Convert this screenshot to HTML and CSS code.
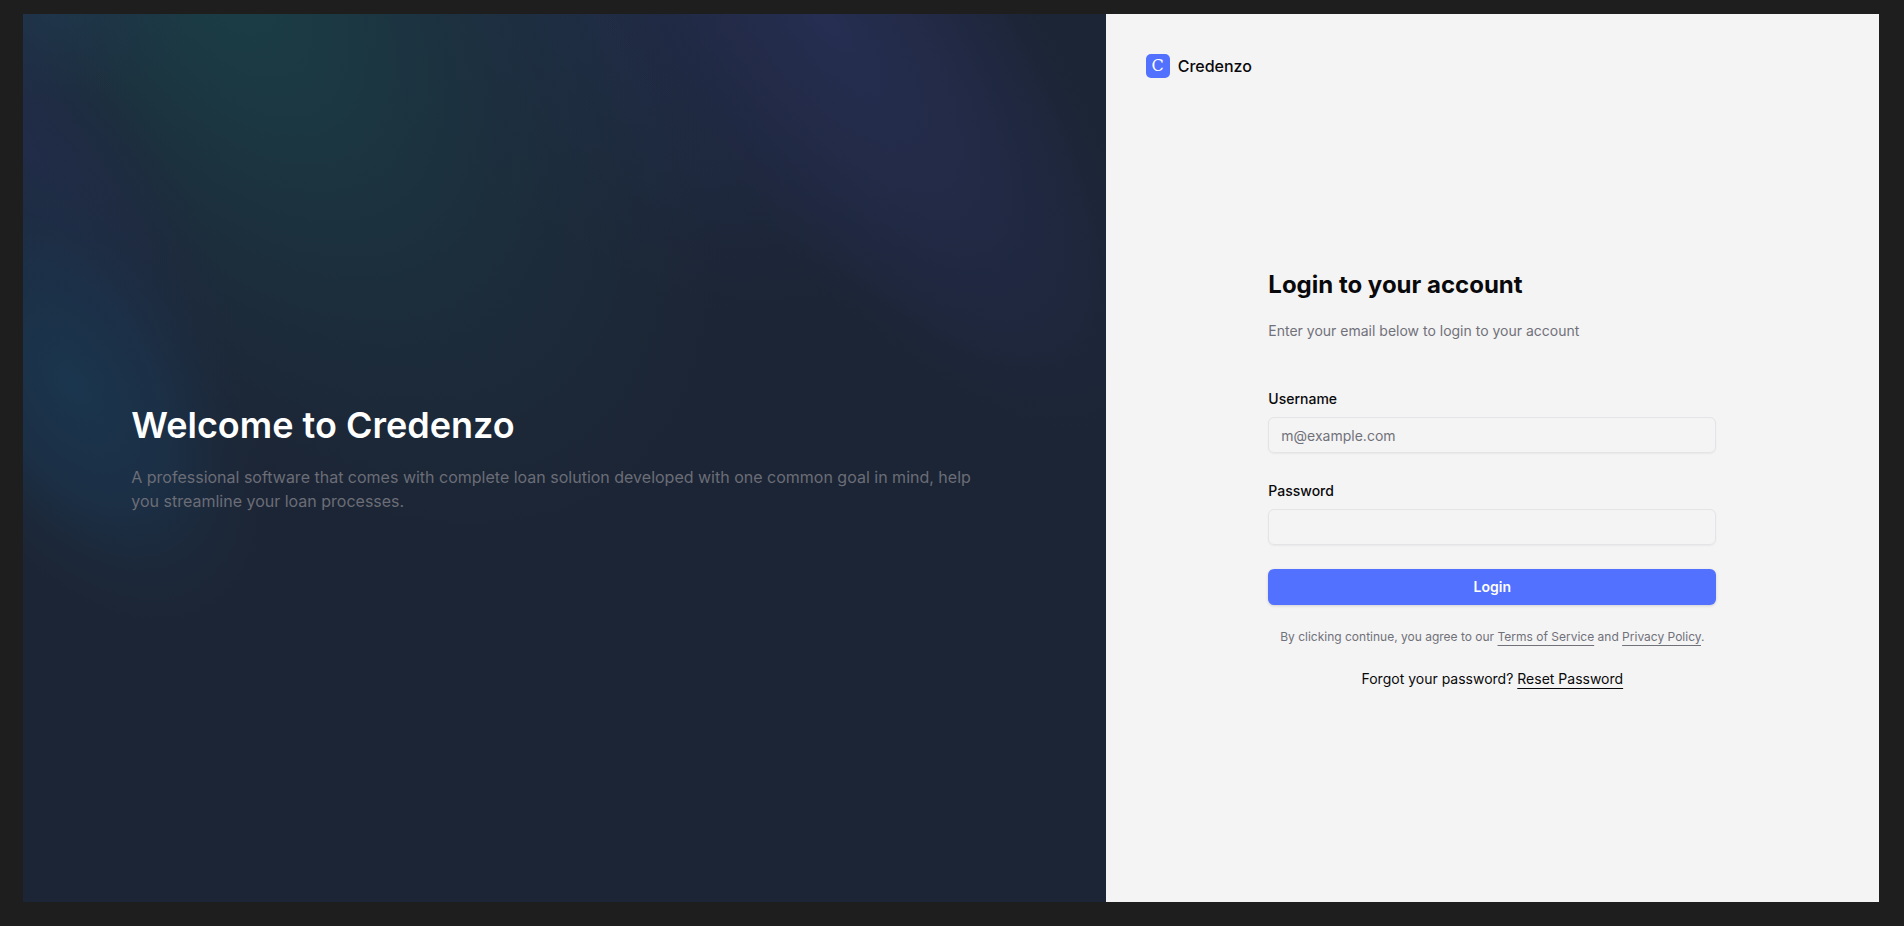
FILE: index.html
```html
<!DOCTYPE html>
<html lang="en">
<head>
<meta charset="utf-8">
<meta name="viewport" content="width=device-width, initial-scale=1">
<title>Credenzo - Login</title>
<link rel="stylesheet" href="styles.css">
</head>
<body>
<div class="shell">
  <section class="hero">
    <svg class="aurora" viewBox="0 0 1083 887" preserveAspectRatio="none" aria-hidden="true">
      <defs>
        <radialGradient id="teal"><stop offset="0" stop-color="#1b3e46"/><stop offset=".25" stop-color="#1b3a44" stop-opacity=".9"/><stop offset=".55" stop-color="#1c3340" stop-opacity=".65"/><stop offset=".8" stop-color="#1c2e3c" stop-opacity=".4"/><stop offset="1" stop-color="#1c2b3a" stop-opacity="0"/></radialGradient>
        <radialGradient id="indigo"><stop offset="0" stop-color="#262e52"/><stop offset=".4" stop-color="#242c4c" stop-opacity=".8"/><stop offset=".7" stop-color="#212945" stop-opacity=".6"/><stop offset="1" stop-color="#1e273a" stop-opacity="0"/></radialGradient>
        <radialGradient id="navy"><stop offset="0" stop-color="#212c49"/><stop offset=".5" stop-color="#202b46" stop-opacity=".6"/><stop offset="1" stop-color="#1f2940" stop-opacity="0"/></radialGradient>
        <radialGradient id="blue"><stop offset="0" stop-color="#1a364e"/><stop offset=".5" stop-color="#1b324a" stop-opacity=".75"/><stop offset="1" stop-color="#1c2c3e" stop-opacity="0"/></radialGradient>
        <radialGradient id="corner"><stop offset="0" stop-color="#20364c" stop-opacity=".8"/><stop offset="1" stop-color="#1f324a" stop-opacity="0"/></radialGradient>
      </defs>
      <ellipse fill="url(#navy)" cx="570" cy="0" rx="400" ry="210" transform="rotate(42 570 0)"/>
      <ellipse fill="url(#teal)" cx="200" cy="-40" rx="660" ry="370" transform="rotate(52 200 -40)"/>
      <ellipse fill="url(#indigo)" cx="800" cy="0" rx="520" ry="190" transform="rotate(54 800 0)"/>
      <ellipse fill="url(#navy)" cx="0" cy="130" rx="360" ry="120" transform="rotate(55 0 130)"/>
      <ellipse fill="url(#blue)" cx="50" cy="370" rx="270" ry="155" transform="rotate(58 50 370)"/>
      <ellipse fill="url(#corner)" cx="30" cy="0" rx="140" ry="90"/>
    </svg>
    <div class="hero-copy">
      <h1 class="hero-title">Welcome to Credenzo</h1>
      <p class="hero-text">A professional software that comes with complete loan solution developed with one common goal in mind, help you streamline your loan processes.</p>
    </div>
  </section>
  <main class="panel">
    <header class="brand">
      <span class="brand-mark" aria-hidden="true">C</span>
      <span class="brand-name">Credenzo</span>
    </header>
    <div class="panel-body">
      <form class="login">
        <h2 class="login-title">Login to your account</h2>
        <p class="login-hint">Enter your email below to login to your account</p>
        <div class="field">
          <label class="label" for="username">Username</label>
          <input class="input" id="username" type="text" placeholder="m@example.com">
        </div>
        <div class="field">
          <label class="label" for="password">Password</label>
          <input class="input" id="password" type="password">
        </div>
        <button class="submit" type="submit">Login</button>
        <p class="terms">By clicking continue, you agree to our <a class="link" href="#terms">Terms of Service</a> and <a class="link" href="#privacy">Privacy Policy</a>.</p>
        <p class="forgot">Forgot your password? <a class="link" href="#reset">Reset Password</a></p>
      </form>
    </div>
  </main>
</div>
</body>
</html>
```
FILE: styles.css
```css
*, *::before, *::after { box-sizing: border-box; }

body {
  margin: 0;
  background: #1e1e1e;
  color: #09090b;
  font-family: Inter, "Liberation Sans", sans-serif;
  font-size: 14px;
  line-height: 20px;
}

h1, h2, p { margin: 0; }

.shell {
  display: grid;
  grid-template-columns: 7fr 5fr;
  min-height: 100vh;
  padding: 14px 25px 24px 23px;
}

.hero {
  position: relative;
  display: flex;
  align-items: center;
  padding: 2px 10% 0;
  overflow: hidden;
  background: #1c2535;
}

.aurora {
  position: absolute;
  inset: 0;
  width: 100%;
  height: 100%;
}

.hero-copy {
  position: relative;
  display: grid;
  gap: 20px;
}

.hero-title {
  color: #fff;
  font-size: 36px;
  font-weight: 600;
  line-height: 40px;
}

.hero-text {
  color: #6b6d77;
  font-size: 16px;
  line-height: 24px;
}

.panel {
  display: flex;
  flex-direction: column;
  padding: 40px;
  background: #f4f4f4;
}

.brand {
  display: flex;
  align-items: center;
  gap: 8px;
}

.brand-mark {
  width: 24px;
  height: 24px;
  border-radius: 5px;
  background: #5271ff;
  color: #fff;
  font-family: "DejaVu Serif", serif;
  font-size: 16px;
  line-height: 24px;
  text-align: center;
}

.brand-name {
  font-size: 16px;
  font-weight: 500;
  line-height: 24px;
}

.panel-body {
  flex: 1;
  display: flex;
  align-items: center;
  justify-content: center;
  padding-top: 18px;
}

.login {
  display: flex;
  flex-direction: column;
  width: 100%;
  max-width: 448px;
}

.login-title {
  font-size: 24px;
  font-weight: 700;
  line-height: 32px;
}

.login-hint {
  margin: 20px 0 48px;
  color: #71717a;
}

.field {
  display: grid;
  gap: 8px;
  margin-bottom: 24px;
}

.label { font-weight: 500; }

.input {
  width: 100%;
  height: 36px;
  padding: 4px 12px;
  border: 1px solid #e4e4e7;
  border-radius: 6px;
  background: transparent;
  box-shadow: 0 1px 2px rgba(0, 0, 0, 0.05);
  color: inherit;
  font: inherit;
}

.input::placeholder { color: #71717a; }

.field + .field { padding-top: 4px; }

.submit {
  height: 36px;
  border: 0;
  border-radius: 6px;
  background: #5271ff;
  box-shadow: 0 1px 3px rgba(0, 0, 0, 0.15);
  color: #fff;
  font: inherit;
  font-weight: 600;
}

.terms {
  margin-top: 22px;
  color: #71717a;
  font-size: 12px;
  text-align: center;
}

.forgot {
  margin-top: 22px;
  text-align: center;
}

.link {
  color: inherit;
  text-decoration: underline;
  text-underline-offset: 4px;
}
```
